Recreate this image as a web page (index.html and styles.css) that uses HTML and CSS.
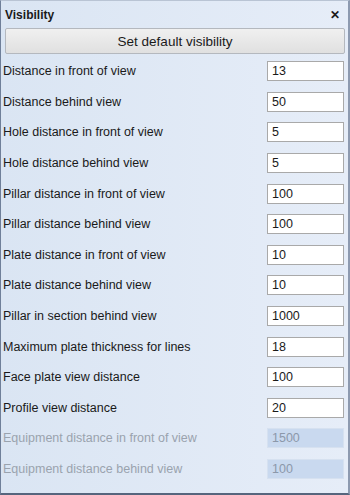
FILE: index.html
```html
<!DOCTYPE html>
<html lang="en">
<head>
    <meta charset="UTF-8">
    <title>Visibility</title>
    <link rel="stylesheet" href="styles.css">
</head>
<body>
    <div class="panel">
        <div class="title-bar">
            <span class="title">Visibility</span>
            <span class="close">&#x2715;</span>
        </div>
        <button class="default-btn">Set default visibility</button>
        <div class="rows">
            <div class="row"><label>Distance in front of view</label><input type="text" value="13"></div>
            <div class="row"><label>Distance behind view</label><input type="text" value="50"></div>
            <div class="row"><label>Hole distance in front of view</label><input type="text" value="5"></div>
            <div class="row"><label>Hole distance behind view</label><input type="text" value="5"></div>
            <div class="row"><label>Pillar distance in front of view</label><input type="text" value="100"></div>
            <div class="row"><label>Pillar distance behind view</label><input type="text" value="100"></div>
            <div class="row"><label>Plate distance in front of view</label><input type="text" value="10"></div>
            <div class="row"><label>Plate distance behind view</label><input type="text" value="10"></div>
            <div class="row"><label>Pillar in section behind view</label><input type="text" value="1000"></div>
            <div class="row"><label>Maximum plate thickness for lines</label><input type="text" value="18"></div>
            <div class="row"><label>Face plate view distance</label><input type="text" value="100"></div>
            <div class="row"><label>Profile view distance</label><input type="text" value="20"></div>
            <div class="row disabled"><label>Equipment distance in front of view</label><input type="text" value="1500" disabled></div>
            <div class="row disabled"><label>Equipment distance behind view</label><input type="text" value="100" disabled></div>
        </div>
    </div>
</body>
</html>
```

FILE: styles.css
```css
html, body {
    margin: 0;
    padding: 0;
}
body {
    font-family: "Liberation Sans", Arial, sans-serif;
    font-size: 12.5px;
    color: #1a1a1a;
    width: 350px;
    height: 495px;
    overflow: hidden;
}
.panel {
    box-sizing: border-box;
    width: 350px;
    height: 495px;
    border-left: 1px solid #6f7f99;
    border-right: 2px solid #8d9ab0;
    border-bottom: 2px solid #56657d;
    border-top: 1px solid #b9c4d4;
    background: linear-gradient(to right, #dae5f3, #e6edf8);
}
.title-bar {
    display: flex;
    justify-content: space-between;
    align-items: center;
    height: 27px;
    padding: 0 8px 0 4px;
}
.title {
    font-weight: bold;
    font-size: 12px;
}
.close {
    font-size: 12px;
    font-weight: bold;
}
.default-btn {
    display: block;
    box-sizing: border-box;
    width: 340px;
    height: 26px;
    margin: 0 0 0 4px;
    border: 1px solid #b4b8be;
    border-radius: 2px;
    background: linear-gradient(to bottom, #f0f0f0, #e0e0e0);
    font-family: inherit;
    font-size: 13.5px;
    color: #1a1a1a;
}
.rows {
    padding-top: 2px;
}
.row {
    display: flex;
    justify-content: space-between;
    align-items: center;
    height: 30.6px;
    padding-left: 2px;
}
.row input {
    box-sizing: border-box;
    width: 77px;
    height: 20px;
    margin-right: 4px;
    border: 1px solid #a9a9a9;
    background: #fff;
    padding: 0 4px;
    font-family: inherit;
    font-size: 12.5px;
    color: #1a1a1a;
}
.row.disabled label {
    color: #9aa3ae;
}
.row.disabled input {
    background: #c9d9ef;
    border-color: #d6e1f0;
    color: #8c98aa;
}
```
